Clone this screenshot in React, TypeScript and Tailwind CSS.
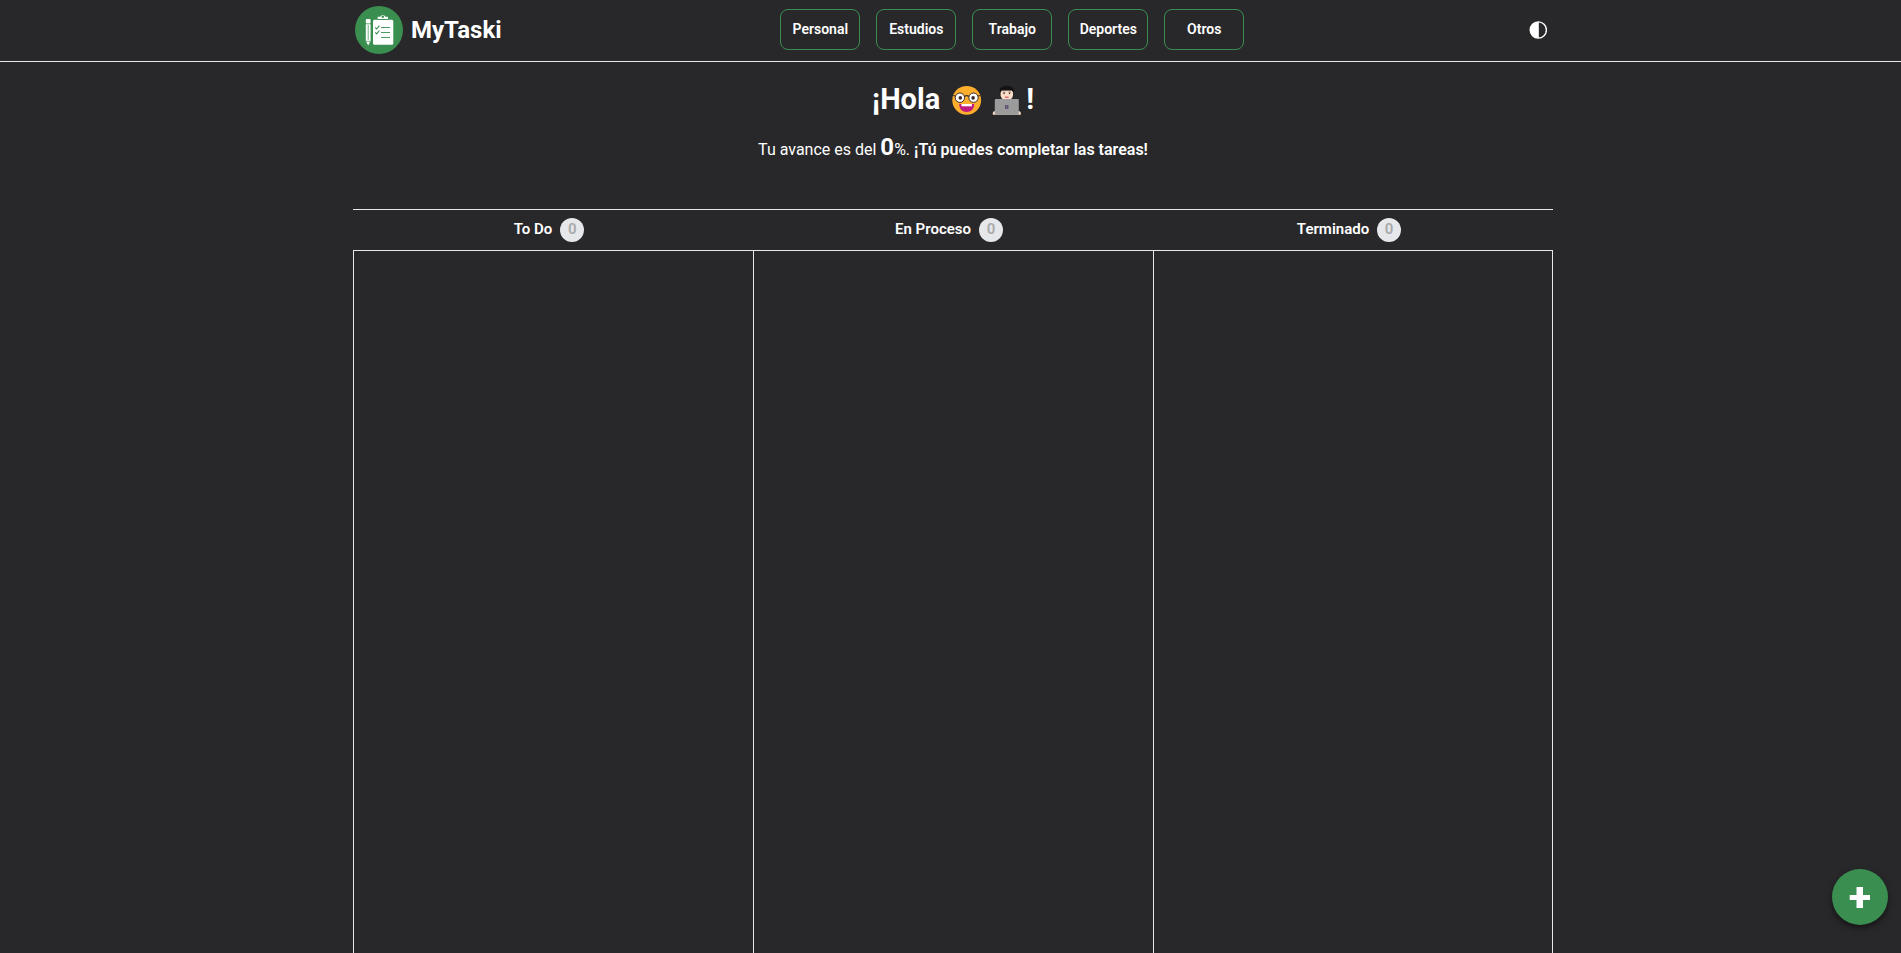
import React from "react";

const categories = ["Personal", "Estudios", "Trabajo", "Deportes", "Otros"];

const columns = [
  { title: "To Do", count: 0 },
  { title: "En Proceso", count: 0 },
  { title: "Terminado", count: 0 },
];

function Logo() {
  return (
    <svg viewBox="0 0 48 48" className="size-12" aria-hidden="true">
      <circle cx="24" cy="24" r="24" fill="#3a8e50" />
      <g fill="#fff">
        <rect x="10.800" y="13" width="4.800" height="4.600" rx="1" />
        <path d="M10.800 18.300h4.800v16.700l-2.400 4.600-2.400-4.600z" />
        <rect x="18" y="13.800" width="20.300" height="25" rx="1.500" />
        <path d="M22.700 13v-2.200h2.600a2.600 2.600 0 0 1 5 0h2.600V13z" />
      </g>
      <circle cx="27.800" cy="10.700" r="1.200" fill="#3a8e50" />
      <path d="M22.200 13.500h11" stroke="#3a8e50" strokeWidth="0.800" />
      <path d="M13.200 19v15M11 35.300h4.400" stroke="#3a8e50" strokeWidth="0.700" fill="none" />
      <g stroke="#3a8e50" strokeWidth="1.100" fill="none">
        <path d="M20.300 21.500l1.400 1.500 2.700-3.300M20.300 26.300l1.400 1.500 2.700-3.300" />
        <path d="M26 21.500h9M26 26.500h9M26 31.500h9" strokeWidth="0.900" />
      </g>
    </svg>
  );
}

function NerdFace() {
  return (
    <svg viewBox="0 0 30 30" className="size-[30px]" role="img" aria-label="Cara con gafas">
      <circle cx="14.700" cy="15.300" r="14.400" fill="#fdae2c" />
      <path d="M7.200 19h15c0 5-3.200 8-7.500 8s-7.500-3-7.500-8z" fill="#bf1b7f" />
      <path d="M9.500 19h10.400v2.300H9.500z" fill="#fff" />
      <circle cx="7.900" cy="12.700" r="4.700" fill="#fff" stroke="#3b2b2b" strokeWidth="1" />
      <circle cx="21.500" cy="12.700" r="4.700" fill="#fff" stroke="#3b2b2b" strokeWidth="1" />
      <path d="M12.400 11.500q2.300-1.600 4.600 0M3.500 11l-2.300-.500M26 11l2.300-.500" stroke="#3b2b2b" strokeWidth="1.200" fill="none" />
      <circle cx="8.300" cy="12.900" r="1.800" fill="#3b2b2b" />
      <circle cx="21.100" cy="12.900" r="1.800" fill="#3b2b2b" />
    </svg>
  );
}

function Technologist() {
  return (
    <svg viewBox="0 0 30 30" className="size-[30px]" role="img" aria-label="Persona con computadora">
      <path d="M8.600 5.500h12.400v4.300c0 3.400-2.700 5.700-6.200 5.700s-6.200-2.300-6.200-5.700z" fill="#fbdcc9" />
      <path d="M7.800 7.500C6.800 3 10 .8 14.800.8S22.700 3 21.800 7.500H21l-1.200-2.300H9.900L8.600 7.500z" fill="#151213" />
      <path d="M10.800 7.200h2.400M16.400 7.200h2.400" stroke="#5a4038" strokeWidth="0.700" />
      <circle cx="12.100" cy="8.500" r="0.700" fill="#3b2b2b" />
      <circle cx="17.500" cy="8.500" r="0.700" fill="#3b2b2b" />
      <path d="M13 12.200h3.600" stroke="#c94b52" strokeWidth="1.100" />
      <path d="M.8 28.300c0-1.500 1-2.300 3-2.300h22c2 0 3 .8 3 2.300v1.500H.8z" fill="#fbdcc9" />
      <rect x="2.800" y="14" width="24" height="15.800" rx="1" fill="#9b9b9b" />
      <path d="M13 20h3.400v4H13z" fill="#5c4a73" />
      <path d="M14.700 20v4" stroke="#9b9b9b" strokeWidth="0.500" />
    </svg>
  );
}

export default function App() {
  return (
    <div className="flex min-h-screen flex-col bg-[#28282a] font-['Roboto',sans-serif] text-white">
      <header className="border-b border-gray-200 pl-[5px]">
        <div className="mx-auto flex h-[61px] w-full max-w-[1200px] items-center justify-between pb-0.5">
          <a href="#inicio" className="flex items-center gap-2 pl-0.5 text-2xl font-bold">
            <Logo />
            MyTaski
          </a>
          <nav className="flex gap-4">
            {categories.map((name) => (
              <button
                key={name}
                type="button"
                className="h-[41px] w-20 rounded-lg border border-[#3a8e50] pb-0.5 text-sm font-semibold"
              >
                {name}
              </button>
            ))}
          </nav>
          <button type="button" aria-label="Cambiar tema" className="flex w-[30px] justify-center">
            <svg viewBox="0 0 18 18" className="size-[18px]" aria-hidden="true">
              <circle cx="9.300" cy="9" r="8.100" fill="none" stroke="#fff" strokeWidth="1.400" />
              <path d="M9.800 1v16h-.5A8 8 0 0 1 9.300 1z" fill="#fff" />
            </svg>
          </button>
        </div>
      </header>

      <main className="flex flex-1 flex-col pl-[5px]">
        <section className="flex h-[147px] flex-col items-center pt-5">
          <h1 className="flex h-9 items-center text-[29px] font-bold">
            ¡Hola
            <span className="ml-3 mr-1 flex gap-2.5">
              <NerdFace />
              <Technologist />
            </span>
            !
          </h1>
          <p className="mt-[13px] leading-8">
            Tu avance es del <span className="text-2xl font-bold">0</span>%.{" "}
            <span className="font-semibold">¡Tú puedes completar las tareas!</span>
          </p>
        </section>

        <section className="mx-auto flex w-full max-w-[1200px] flex-1 flex-col">
          <div className="grid h-[41px] grid-cols-3 border-t border-gray-200">
            {columns.map((column) => (
              <h2 key={column.title} className="flex items-center justify-center text-[15px] font-semibold">
                <span className="pb-0.5">{column.title}</span>
                <span className="mx-2 flex size-6 items-center justify-center rounded-full bg-gray-200 pb-0.5 text-[15px] text-[#a9a9a9]">
                  {column.count}
                </span>
              </h2>
            ))}
          </div>
          <div className="grid flex-1 grid-cols-3 border-t border-gray-200">
            {columns.map((column) => (
              <div key={column.title} className="border-l border-gray-200 last:border-r" />
            ))}
          </div>
        </section>
      </main>

      <button
        type="button"
        aria-label="Agregar tarea"
        className="fixed bottom-7 right-[13px] flex size-14 items-center justify-center rounded-full bg-[#3a8e50] shadow-[0_3px_6px_rgba(0,0,0,0.5)]"
      >
        <svg viewBox="0 0 22 22" className="size-[22px]" aria-hidden="true">
          <path d="M7.500 1H14v8h7v5h-7v8H7.500v-8H.7V9h6.800z" fill="#fff" />
        </svg>
      </button>
    </div>
  );
}
